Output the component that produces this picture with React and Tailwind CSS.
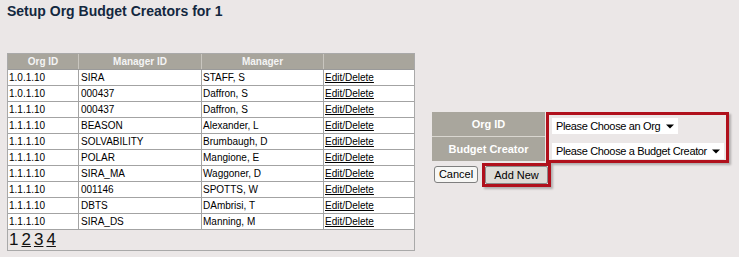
import React from "react";

const creators = [
  { org: "1.0.1.10", managerId: "SIRA", manager: "STAFF, S" },
  { org: "1.0.1.10", managerId: "000437", manager: "Daffron, S" },
  { org: "1.1.1.10", managerId: "000437", manager: "Daffron, S" },
  { org: "1.1.1.10", managerId: "BEASON", manager: "Alexander, L" },
  { org: "1.1.1.10", managerId: "SOLVABILITY", manager: "Brumbaugh, D" },
  { org: "1.1.1.10", managerId: "POLAR", manager: "Mangione, E" },
  { org: "1.1.1.10", managerId: "SIRA_MA", manager: "Waggoner, D" },
  { org: "1.1.1.10", managerId: "001146", manager: "SPOTTS, W" },
  { org: "1.1.1.10", managerId: "DBTS", manager: "DAmbrisi, T" },
  { org: "1.1.1.10", managerId: "SIRA_DS", manager: "Manning, M" },
];

function Arrow() {
  return (
    <svg width="8" height="5" viewBox="0 0 8 5" className="shrink-0">
      <path d="M0 0.5 L8 0.5 L4 4.5 Z" fill="#000" />
    </svg>
  );
}

function FakeSelect({ label, width }) {
  return (
    <div
      className={`${width} h-[16px] bg-white flex items-center justify-between pl-[4px] pr-[4px] text-[11px] tracking-[-0.35px] text-black`}
    >
      <span>{label}</span>
      <Arrow />
    </div>
  );
}

export default function App() {
  return (
    <div className="min-h-[257px] bg-[#ebe7e7] pl-[7px] pt-[3px] font-['Liberation_Sans',Arial,sans-serif]">
      <h1 className="text-[14px] leading-[16px] font-bold text-[#13283f]">
        Setup Org Budget Creators for 1
      </h1>

      <div className="flex items-start mt-[34px]">
        {/* list of creators */}
        <div className="w-[408px] border border-[#a9a9a9]">
          <div className="grid grid-cols-[71px_123px_122px_90px] h-[16px] bg-[#a8a59c] border-b border-[#9a9a9a] text-[10px] font-bold text-[#f4f4f4]">
            <div className="flex items-center justify-center border-r border-[#c9c6bf]">Org ID</div>
            <div className="flex items-center justify-center border-r border-[#c9c6bf]">Manager ID</div>
            <div className="flex items-center justify-center border-r border-[#c9c6bf]">Manager</div>
            <div></div>
          </div>
          {creators.map((c, i) => (
            <div
              key={i}
              className="grid grid-cols-[71px_123px_122px_90px] h-[16px] bg-white border-b border-[#a3a3a3] text-[10px] text-black"
            >
              <div className="flex items-center pl-[1px] border-r border-[#a3a3a3]">{c.org}</div>
              <div className="flex items-center pl-[2px] border-r border-[#a3a3a3]">{c.managerId}</div>
              <div className="flex items-center pl-[1px] border-r border-[#a3a3a3]">{c.manager}</div>
              <div className="flex items-center pl-[1px]">
                <a href="#" className="underline text-black">
                  Edit/Delete
                </a>
              </div>
            </div>
          ))}
          <div className="h-[20px] flex items-center gap-[3px] pl-[1px] text-[17px] leading-[20px] text-[#111]">
            <span>1</span>
            <a href="#" className="underline">2</a>
            <a href="#" className="underline">3</a>
            <a href="#" className="underline">4</a>
          </div>
        </div>

        {/* add form */}
        <div className="ml-[17px] mt-[59px]">
          <div className="flex items-start">
            <div className="w-[113px]">
              <div className="h-[25px] bg-[#a9a69d] border-b border-[#d9d6d0] flex items-center justify-center text-[11px] font-bold text-white">
                Org ID
              </div>
              <div className="h-[24px] bg-[#a9a69d] flex items-center justify-center text-[11px] font-bold text-white">
                Budget Creator
              </div>
            </div>
            <div className="ml-[1px] w-[183px] h-[51px] border-[3px] border-[#b0101c] pt-[3px] pl-[3px] shadow-[2px_2px_2px_rgba(0,0,0,0.25)]">
              <FakeSelect label="Please Choose an Org" width="w-[126px]" />
              <div className="mt-[9px]">
                <FakeSelect label="Please Choose a Budget Creator" width="w-[172px]" />
              </div>
            </div>
          </div>
          <div className="flex items-start">
            <button className="ml-[2px] mt-[3px] w-[44px] h-[17px] rounded-[3px] border border-[#7f7f7f] bg-[#f7f7f5] text-[11px] leading-[15px] text-black">
              Cancel
            </button>
            <div className="ml-[4px] w-[69px] h-[24px] flex border-[3px] border-[#b0101c] shadow-[2px_2px_2px_rgba(0,0,0,0.25)]">
              <button className="w-full h-full rounded-[2px] border border-[#8a8a8a] bg-[#dedcd7] text-[11px] leading-[15px] text-black">
                Add New
              </button>
            </div>
          </div>
        </div>
      </div>
    </div>
  );
}
